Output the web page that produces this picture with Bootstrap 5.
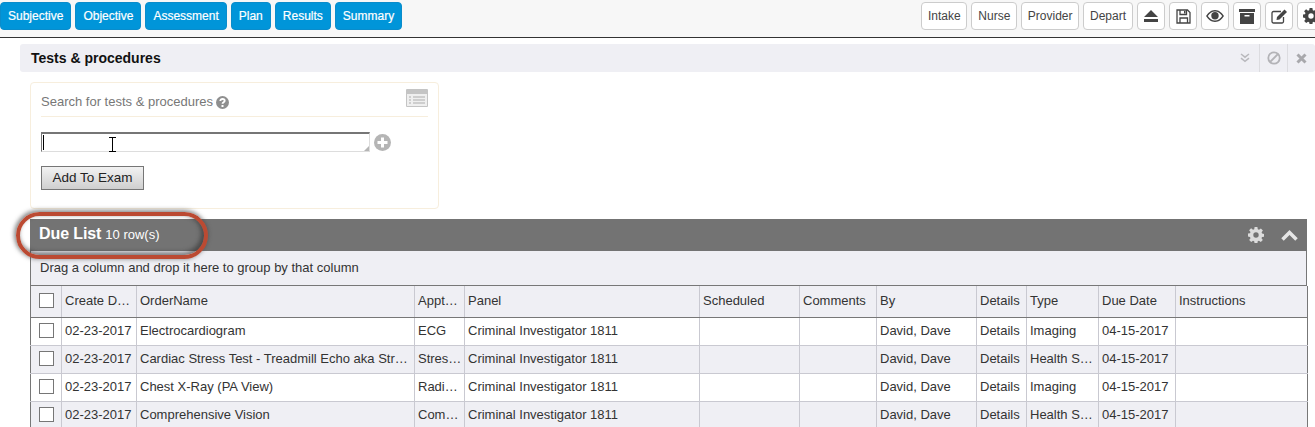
<!DOCTYPE html>
<html lang="en">
<head>
  <meta charset="UTF-8">
  <meta name="viewport" content="width=device-width, initial-scale=1.0">
  <title>Tests &amp; procedures</title>
  <link href="https://cdn.jsdelivr.net/npm/bootstrap@5.3.3/dist/css/bootstrap.min.css" rel="stylesheet">
  <style>
    body {
      font-family: "Liberation Sans", Arial, sans-serif;
      font-size: 13px;
      color: #333;
      background: #fff;
      overflow: hidden;
      width: 1315px;
      height: 427px;
    }

    .top-bar {
      height: 38px;
      padding-top: 2px;
      background: #f7f7f7;
      border-bottom: 1px solid #333;
    }

    .top-bar .btn {
      height: 28px;
      padding: 0 7px;
      font-size: 12px;
      line-height: 26px;
      border-radius: 4px;
    }

    .bar-right {
      margin-right: -10px;
    }

    .btn-section {
      background: #0095d9;
      border: 1px solid #0a8ccb;
      color: #fff;
      font-weight: 400;
      -webkit-text-stroke: 0.2px #fff;
    }

    .btn-plain {
      background: #fff;
      border: 1px solid #ccc;
      color: #444;
    }

    .top-bar .btn-word {
      padding: 0 5.5px;
      min-width: 46px;
    }

    .top-bar .btn-depart {
      min-width: 50px;
    }

    .top-bar .btn-icon {
      width: 28px;
      padding: 0;
      display: flex;
      align-items: center;
      justify-content: center;
      color: #444;
    }

    .title-strip {
      height: 28px;
      margin: 6px 0 0 20px;
      padding-left: 11px;
      background: #efeff4;
      border-radius: 3px;
      font-size: 14px;
      font-weight: 700;
      color: #111;
    }

    .strip-tool {
      width: 28px;
      height: 28px;
      border-left: 1px solid #dcdce0;
      display: flex;
      align-items: center;
      justify-content: center;
    }

    .strip-tool-first {
      border-left: 0;
    }

    .search-box {
      width: 409px;
      height: 127px;
      margin: 10px 0 0 30px;
      padding: 0 10px;
      border: 1px solid #f7eedd;
      border-radius: 4px;
    }

    .search-head {
      height: 34px;
      border-bottom: 1px solid #f7eedd;
      font-size: 13px;
      color: #777;
    }

    .search-label {
      padding-top: 5px;
    }

    .help-mark {
      margin-left: -1px;
    }

    .search-input {
      display: block;
      width: 329px;
      height: 20px;
      padding: 0;
      border-style: solid;
      border-width: 2px 1px 1px 1px;
      border-color: #767676 #ddd #ddd #767676;
      outline: 0;
      resize: none;
    }

    .input-line {
      margin-top: 15px;
    }

    .input-corner {
      position: absolute;
      left: 323px;
      top: 14px;
      width: 0;
      height: 0;
      border-left: 5px solid transparent;
      border-bottom: 5px solid #b5b5b5;
    }

    .text-caret {
      position: absolute;
      left: 2px;
      top: 3px;
      width: 1px;
      height: 15px;
      background: #000;
    }

    .mouse-beam {
      position: absolute;
      left: 67px;
      top: 5px;
    }

    .btn-exam {
      width: 103px;
      height: 24px;
      margin-top: 14px;
      padding: 0;
      font-size: 13.5px;
      line-height: 22px;
      color: #222;
      border: 1px solid #767676;
      border-radius: 0;
      background: linear-gradient(#f2f2f2, #cfcfcf);
    }

    .due-panel {
      margin: 10px 8px 0 30px;
    }

    .due-head {
      height: 32px;
      padding: 0 9px;
      background: #737373;
      color: #fff;
    }

    .due-title {
      margin-top: -2px;
    }

    .due-name {
      font-size: 16px;
      font-weight: 700;
      letter-spacing: -0.1px;
    }

    .due-count {
      font-size: 13px;
      margin-left: 4px;
    }

    .head-gear {
      color: #dcdcdc;
      margin-right: 1px;
    }

    .group-hint {
      height: 35px;
      padding: 0 9px;
      line-height: 33px;
      background: #efeff4;
      border-left: 1px solid #777;
      border-right: 1px solid #777;
      border-bottom: 1px solid #777;
      color: #333;
    }

    .due-grid {
      table-layout: fixed;
      width: 1277px;
      margin: 0;
      border-collapse: collapse;
      border-left: 1px solid #777;
      border-right: 1px solid #777;
      font-size: 13px;
    }

    .due-grid th,
    .due-grid td {
      height: 28px;
      padding: 0 3px;
      border: 0;
      border-left: 1px solid #c9c9d1;
      border-bottom: 1px solid #c9c9d1;
      font-weight: 400;
      color: #333;
      white-space: nowrap;
      overflow: hidden;
      vertical-align: middle;
      background: #fff;
    }

    .due-grid th {
      height: 31px;
      padding-bottom: 2px;
      background: #efeff4;
      border-bottom: 1px solid #777;
    }

    .due-grid tr.row-alt td {
      background: #efeff4;
    }

    .due-grid th:first-child,
    .due-grid td:first-child {
      border-left: 0;
      padding-bottom: 0;
      text-align: center;
    }

    .tick-box {
      display: inline-block;
      width: 15px;
      height: 15px;
      margin-top: 4px;
      background: #fff;
      border: 1px solid #767676;
    }

    .callout-ring {
      position: absolute;
      left: 16px;
      top: 212px;
      width: 192px;
      height: 47px;
      border: 4px solid #bb4a32;
      border-radius: 24px;
      box-shadow: -1px -1px 4px 1px rgba(60, 60, 60, .6), inset -2px -2px 4px 1px rgba(50, 50, 50, .6);
      pointer-events: none;
    }
  </style>
</head>
<body>

<svg width="0" height="0" class="d-block">
  <symbol id="ico-gear" viewBox="0 0 16 16">
    <path fill="currentColor" fill-rule="evenodd" d="M6.6 0h2.8l.4 2.2 1.2.5L12.900 1.400l2 2-1.300 1.900.5 1.200 2 .4v2.800l-2.100.4-.5 1.200 1.300 1.800-2 2-1.900-1.300-1.200.5-.3 2.100H6.600l-.4-2.100-1.200-.5-1.800 1.300-2-2 1.300-1.900-.5-1.200L0 9.400V6.600l2-.4.500-1.200L1.100 3.300l2-2L5 2.700l1.200-.5zM8 5.300a2.700 2.700 0 1 0 0 5.400 2.700 2.700 0 0 0 0-5.400z"/>
  </symbol>
</svg>

<div class="top-bar d-flex justify-content-between">
  <div class="d-flex gap-1">
    <button class="btn btn-section">Subjective</button>
    <button class="btn btn-section">Objective</button>
    <button class="btn btn-section">Assessment</button>
    <button class="btn btn-section">Plan</button>
    <button class="btn btn-section">Results</button>
    <button class="btn btn-section">Summary</button>
  </div>
  <div class="bar-right d-flex gap-1 flex-shrink-0">
    <button class="btn btn-plain btn-word">Intake</button>
    <button class="btn btn-plain btn-word">Nurse</button>
    <button class="btn btn-plain btn-word">Provider</button>
    <button class="btn btn-plain btn-word btn-depart">Depart</button>
    <button class="btn btn-plain btn-icon">
      <svg width="16" height="14" viewBox="0 0 16 14"><path fill="#444" d="M8 1l7 7H1zM1 10h14v3H1z"/></svg>
    </button>
    <button class="btn btn-plain btn-icon">
      <svg width="15" height="15" viewBox="0 0 15 15"><path fill="none" stroke="#444" stroke-width="1.300" d="M1 1h10.500L14 3.500V14H1zM4 1v4.500h6.500V1M4 14V9h7.500v5"/><path fill="#444" d="M8 2h1.500v2.500H8z"/></svg>
    </button>
    <button class="btn btn-plain btn-icon">
      <svg width="18" height="12" viewBox="0 0 18 12"><path fill="#444" fill-rule="evenodd" d="M9 0c4 0 7 3 9 6-2 3-5 6-9 6S2 9 0 6c2-3 5-6 9-6zM9 1.500C6 1.500 3.500 3.500 1.800 6 3.500 8.500 6 10.500 9 10.500s5.500-2 7.200-4.500C14.500 3.500 12 1.500 9 1.500z"/><circle cx="9" cy="5.800" r="3.700" fill="#444"/></svg>
    </button>
    <button class="btn btn-plain btn-icon">
      <svg width="16" height="15" viewBox="0 0 16 15"><path fill="#444" fill-rule="evenodd" d="M0 0h16v3H0zM1 4h14v11H1zM5.500 6v1.500h5V6z"/></svg>
    </button>
    <button class="btn btn-plain btn-icon">
      <svg width="17" height="15" viewBox="0 0 17 15"><path fill="none" stroke="#444" stroke-width="1.300" d="M10 2.500H2.500a1.500 1.500 0 0 0-1.500 1.500v8.500A1.500 1.500 0 0 0 2.500 14H11a1.500 1.500 0 0 0 1.500-1.500V8"/><path fill="#444" d="M6 8l7.500-7.500 2.500 2.500L8.500 10.500 5.500 11z"/></svg>
    </button>
    <button class="btn btn-plain btn-icon">
      <svg width="18" height="16" viewBox="0 0 16 16"><use href="#ico-gear"/></svg>
    </button>
  </div>
</div>

<div class="title-strip d-flex align-items-center justify-content-between">
  <span>Tests &amp; procedures</span>
  <div class="d-flex">
    <span class="strip-tool strip-tool-first">
      <svg width="10" height="10" viewBox="0 0 10 10"><path fill="none" stroke="#b9b9bd" stroke-width="1.500" d="M1 1l4 3.200L9 1M1 5.200l4 3.200 4-3.200"/></svg>
    </span>
    <span class="strip-tool">
      <svg width="14" height="14" viewBox="0 0 14 14"><circle cx="7" cy="7" r="5.700" fill="none" stroke="#b3b3b7" stroke-width="1.800"/><path stroke="#b3b3b7" stroke-width="1.800" d="M3 11l8-8"/></svg>
    </span>
    <span class="strip-tool">
      <svg width="11" height="11" viewBox="0 0 11 11"><path stroke="#a8a8ac" stroke-width="3" d="M1.500 1.500l8 8M9.500 1.500l-8 8"/></svg>
    </span>
  </div>
</div>

<div class="search-box">
  <div class="search-head d-flex align-items-center justify-content-between">
    <span class="search-label">Search for tests &amp; procedures
      <svg width="13" height="13" viewBox="0 0 13 13" class="help-mark align-text-bottom"><circle cx="6.500" cy="6.500" r="6.500" fill="#8f8f8f"/><path fill="none" stroke="#fff" stroke-width="1.800" d="M4.300 5c0-1.400 1-2 2.200-2s2.200.7 2.200 1.800c0 1.500-2.200 1.400-2.200 3"/><rect x="5.500" y="9" width="2" height="2" fill="#fff"/></svg>
    </span>
    <svg width="22" height="18" viewBox="0 0 22 18" class="mb-1"><rect width="22" height="18" rx="1" fill="#c4c4c4"/><rect x="1" y="5" width="20" height="12" fill="#efefef"/><path stroke="#c4c4c4" stroke-width="1.500" d="M3 8h2M7 8h12M3 11h2M7 11h12M3 14h2M7 14h12"/></svg>
  </div>
  <div class="input-line d-flex align-items-center gap-1 position-relative">
    <textarea class="search-input" aria-label="Search"></textarea>
    <span class="input-corner"></span>
    <span class="text-caret"></span>
    <svg class="mouse-beam" width="9" height="15" viewBox="0 0 9 15"><path fill="none" stroke="#000" d="M1 .5h7M4.500.5v14M1 14.500h7"/></svg>
    <svg width="17" height="17" viewBox="0 0 17 17"><circle cx="8.500" cy="8.500" r="8.500" fill="#b5b5b5"/><path stroke="#fff" stroke-width="3" d="M3.500 8.500h10M8.500 3.500v10"/></svg>
  </div>
  <button class="btn btn-exam d-block">Add To Exam</button>
</div>

<div class="due-panel">
  <div class="due-head d-flex align-items-center justify-content-between">
    <div class="due-title"><span class="due-name">Due List</span><span class="due-count">10 row(s)</span></div>
    <div class="d-flex align-items-center gap-3">
      <svg class="head-gear" width="16" height="16" viewBox="0 0 16 16"><use href="#ico-gear"/></svg>
      <svg width="17" height="11" viewBox="0 0 17 11"><path fill="none" stroke="#e6e6e6" stroke-width="3.500" d="M1.500 9.500l7-7 7 7"/></svg>
    </div>
  </div>
  <div class="group-hint">Drag a column and drop it here to group by that column</div>
  <table class="table due-grid">
    <colgroup id="gridCols"></colgroup>
    <thead><tr id="gridHead"></tr></thead>
    <tbody id="gridBody"></tbody>
  </table>
</div>

<div class="callout-ring"></div>

<script>
  const colWidths = [31, 75, 278, 50, 235, 100, 77, 100, 50, 72, 77, 132];
  const headers = ["Create D…", "OrderName", "Appt…", "Panel", "Scheduled", "Comments", "By", "Details", "Type", "Due Date", "Instructions"];
  const rows = [
    ["02-23-2017", "Electrocardiogram", "ECG", "Imaging"],
    ["02-23-2017", "Cardiac Stress Test - Treadmill Echo aka Str…", "Stres…", "Health S…"],
    ["02-23-2017", "Chest X-Ray (PA View)", "Radi…", "Imaging"],
    ["02-23-2017", "Comprehensive Vision", "Com…", "Health S…"]
  ];

  document.getElementById("gridCols").innerHTML = colWidths.map(w => `<col style="width:${w}px">`).join("");
  document.getElementById("gridHead").innerHTML = `<th><span class="tick-box"></span></th>` + headers.map(h => `<th>${h}</th>`).join("");
  document.getElementById("gridBody").innerHTML = rows.map((r, i) => `
    <tr class="${i % 2 ? "row-alt" : ""}">
      <td><span class="tick-box"></span></td>
      <td>${r[0]}</td><td>${r[1]}</td><td>${r[2]}</td>
      <td>Criminal Investigator 1811</td><td></td><td></td>
      <td>David, Dave</td><td>Details</td><td>${r[3]}</td><td>04-15-2017</td><td></td>
    </tr>`).join("");
</script>
<script src="https://cdn.jsdelivr.net/npm/bootstrap@5.3.3/dist/js/bootstrap.bundle.min.js"></script>
</body>
</html>
